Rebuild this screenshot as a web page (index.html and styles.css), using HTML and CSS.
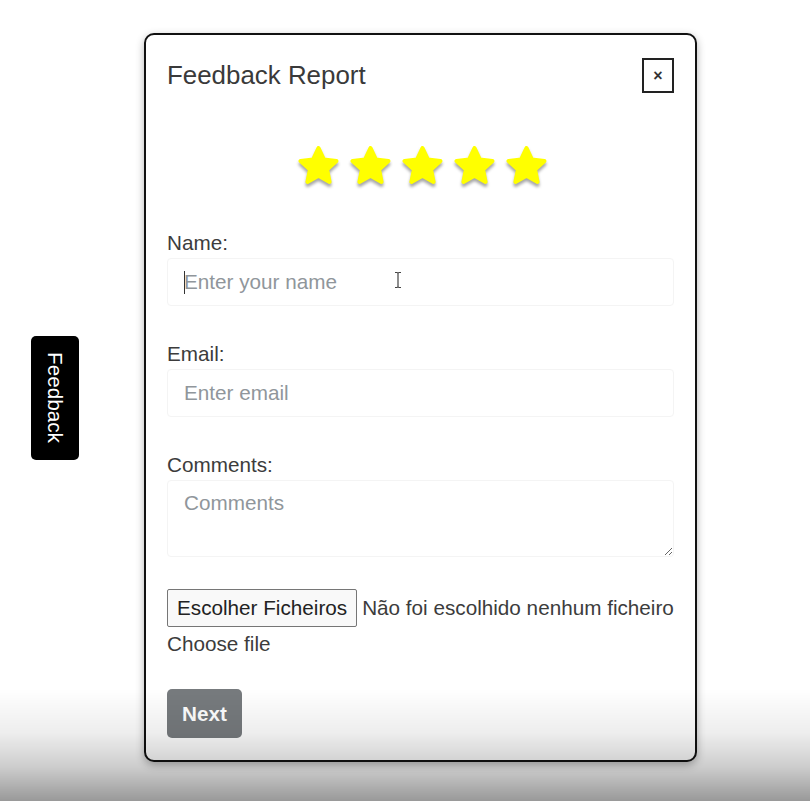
FILE: index.html
```html
<!DOCTYPE html>
<html lang="pt">
<head>
<meta charset="utf-8">
<title>Feedback Report</title>
<link rel="stylesheet" href="styles.css">
</head>
<body>
<div class="page">
  <div class="tab">Feedback</div>
  <div class="modal">
    <div class="modal-header">
      <h2 class="title">Feedback Report</h2>
      <button class="close" type="button">×</button>
    </div>
    <div class="stars">
      <svg class="star" viewBox="0 0 44 42"><path d="M22 4 L27.3 15.2 L39.5 16.6 L30.4 25 L32.8 37 L22 31 L11.2 37 L13.6 25 L4.5 16.6 L16.7 15.2 Z"/></svg>
      <svg class="star" viewBox="0 0 44 42"><path d="M22 4 L27.3 15.2 L39.5 16.6 L30.4 25 L32.8 37 L22 31 L11.2 37 L13.6 25 L4.5 16.6 L16.7 15.2 Z"/></svg>
      <svg class="star" viewBox="0 0 44 42"><path d="M22 4 L27.3 15.2 L39.5 16.6 L30.4 25 L32.8 37 L22 31 L11.2 37 L13.6 25 L4.5 16.6 L16.7 15.2 Z"/></svg>
      <svg class="star" viewBox="0 0 44 42"><path d="M22 4 L27.3 15.2 L39.5 16.6 L30.4 25 L32.8 37 L22 31 L11.2 37 L13.6 25 L4.5 16.6 L16.7 15.2 Z"/></svg>
      <svg class="star" viewBox="0 0 44 42"><path d="M22 4 L27.3 15.2 L39.5 16.6 L30.4 25 L32.8 37 L22 31 L11.2 37 L13.6 25 L4.5 16.6 L16.7 15.2 Z"/></svg>
    </div>
    <div class="group">
      <label class="label">Name:</label>
      <div class="field-wrap">
        <input class="field" type="text" placeholder="Enter your name">
        <span class="caret"></span>
        <svg class="ibeam" viewBox="0 0 10 18"><path d="M2 1.5 H4 Q5 1.5 5 3 V15 Q5 16.5 4 16.5 H2 M8 1.5 H6 Q5 1.5 5 3 M5 15 Q5 16.5 6 16.5 H8"/></svg>
      </div>
    </div>
    <div class="group">
      <label class="label">Email:</label>
      <input class="field" type="email" placeholder="Enter email">
    </div>
    <div class="group">
      <label class="label">Comments:</label>
      <textarea class="field area" placeholder="Comments"></textarea>
    </div>
    <div class="file-row">
      <span class="file-btn">Escolher Ficheiros</span>
      <span class="file-name">Não foi escolhido nenhum ficheiro</span>
    </div>
    <div class="file-label">Choose file</div>
    <button class="next" type="button">Next</button>
  </div>
</div>
<div class="fade"></div>
</body>
</html>
```
FILE: styles.css
```css
* { box-sizing: border-box; }
html, body { margin: 0; padding: 0; background: #fff; }
body {
  font-family: "Liberation Sans", Arial, sans-serif;
  font-size: 20.7px;
  color: #3c3c3c;
  height: 801px;
  overflow: hidden;
}
.page {
  display: flex;
  align-items: center;
  padding: 33px 0 0 31px;
  gap: 65px;
}
.tab {
  width: 48px;
  height: 124px;
  background: #000;
  color: #fff;
  border-radius: 5px;
  writing-mode: vertical-rl;
  display: flex;
  align-items: center;
  justify-content: center;
  font-size: 20.7px;
  line-height: 1;
}
.modal {
  width: 553px;
  height: 729px;
  border: 2px solid #111;
  border-radius: 10px;
  padding: 23px 21px 21px;
  background: #fff;
  box-shadow: 0 3px 8px rgba(0,0,0,0.3);
  display: flex;
  flex-direction: column;
}
.modal-header {
  display: flex;
  align-items: center;
  justify-content: space-between;
  height: 35px;
}
.title {
  margin: 0;
  font-weight: normal;
  font-size: 25.9px;
  color: #3a3a3a;
  line-height: 1.2;
}
.close {
  width: 32px;
  height: 35px;
  border: 2px solid #222;
  background: #fff;
  padding: 0;
  font-family: "Liberation Sans", Arial, sans-serif;
  font-size: 16px;
  font-weight: bold;
  color: #333;
  line-height: 1;
}
.stars {
  display: flex;
  justify-content: center;
  gap: 7px;
  margin: 51px 0 38px 4px;
  height: 45px;
}
.star {
  width: 45px;
  height: 43px;
  filter: drop-shadow(0 3px 1.5px rgba(0,0,0,0.35));
}
.star path {
  fill: #ffff00;
  stroke: #ffff00;
  stroke-width: 4;
  stroke-linejoin: round;
}
.group {
  display: flex;
  flex-direction: column;
  margin-bottom: 32px;
}
.label {
  line-height: 31px;
  height: 31px;
  color: #3c3c3c;
}
.field-wrap { position: relative; }
.field {
  width: 100%;
  height: 48px;
  border: 1px solid #f4f4f4;
  border-radius: 4px;
  padding: 0 16px;
  font-family: "Liberation Sans", Arial, sans-serif;
  font-size: 20.7px;
  color: #333;
  background: #fff;
  outline: none;
  display: block;
}
.field::placeholder { color: #90969b; }
.area {
  height: 77px;
  padding-top: 10px;
  resize: vertical;
  line-height: 1.2;
}
.caret {
  position: absolute;
  left: 17px;
  top: 13px;
  width: 1px;
  height: 23px;
  background: #333;
}
.ibeam {
  position: absolute;
  left: 226px;
  top: 13px;
  width: 10px;
  height: 18px;
}
.ibeam path {
  fill: none;
  stroke: #444;
  stroke-width: 1.2;
}
.file-row {
  display: flex;
  align-items: center;
  gap: 5px;
  height: 38px;
}
.file-btn {
  height: 38px;
  border: 1px solid #767676;
  border-radius: 2px;
  background: #f9f9f9;
  padding: 0 9px;
  display: flex;
  align-items: center;
  color: #222;
  white-space: nowrap;
}
.file-name {
  color: #3c3c3c;
  white-space: nowrap;
}
.file-label {
  line-height: 31px;
  height: 31px;
  margin-top: 1px;
  color: #3c3c3c;
}
.next {
  margin-top: 30px;
  align-self: flex-start;
  width: 75px;
  height: 49px;
  background: #777b7e;
  color: #fff;
  border: none;
  border-radius: 5px;
  font-family: "Liberation Sans", Arial, sans-serif;
  font-size: 20.7px;
  font-weight: bold;
  padding: 0;
}
.fade {
  position: fixed;
  left: 0;
  right: 0;
  bottom: 0;
  height: 112px;
  background: linear-gradient(to bottom, rgba(0,0,0,0) 0%, rgba(0,0,0,0.07) 40%, rgba(0,0,0,0.2) 70%, rgba(0,0,0,0.4) 100%);
  pointer-events: none;
}
```
